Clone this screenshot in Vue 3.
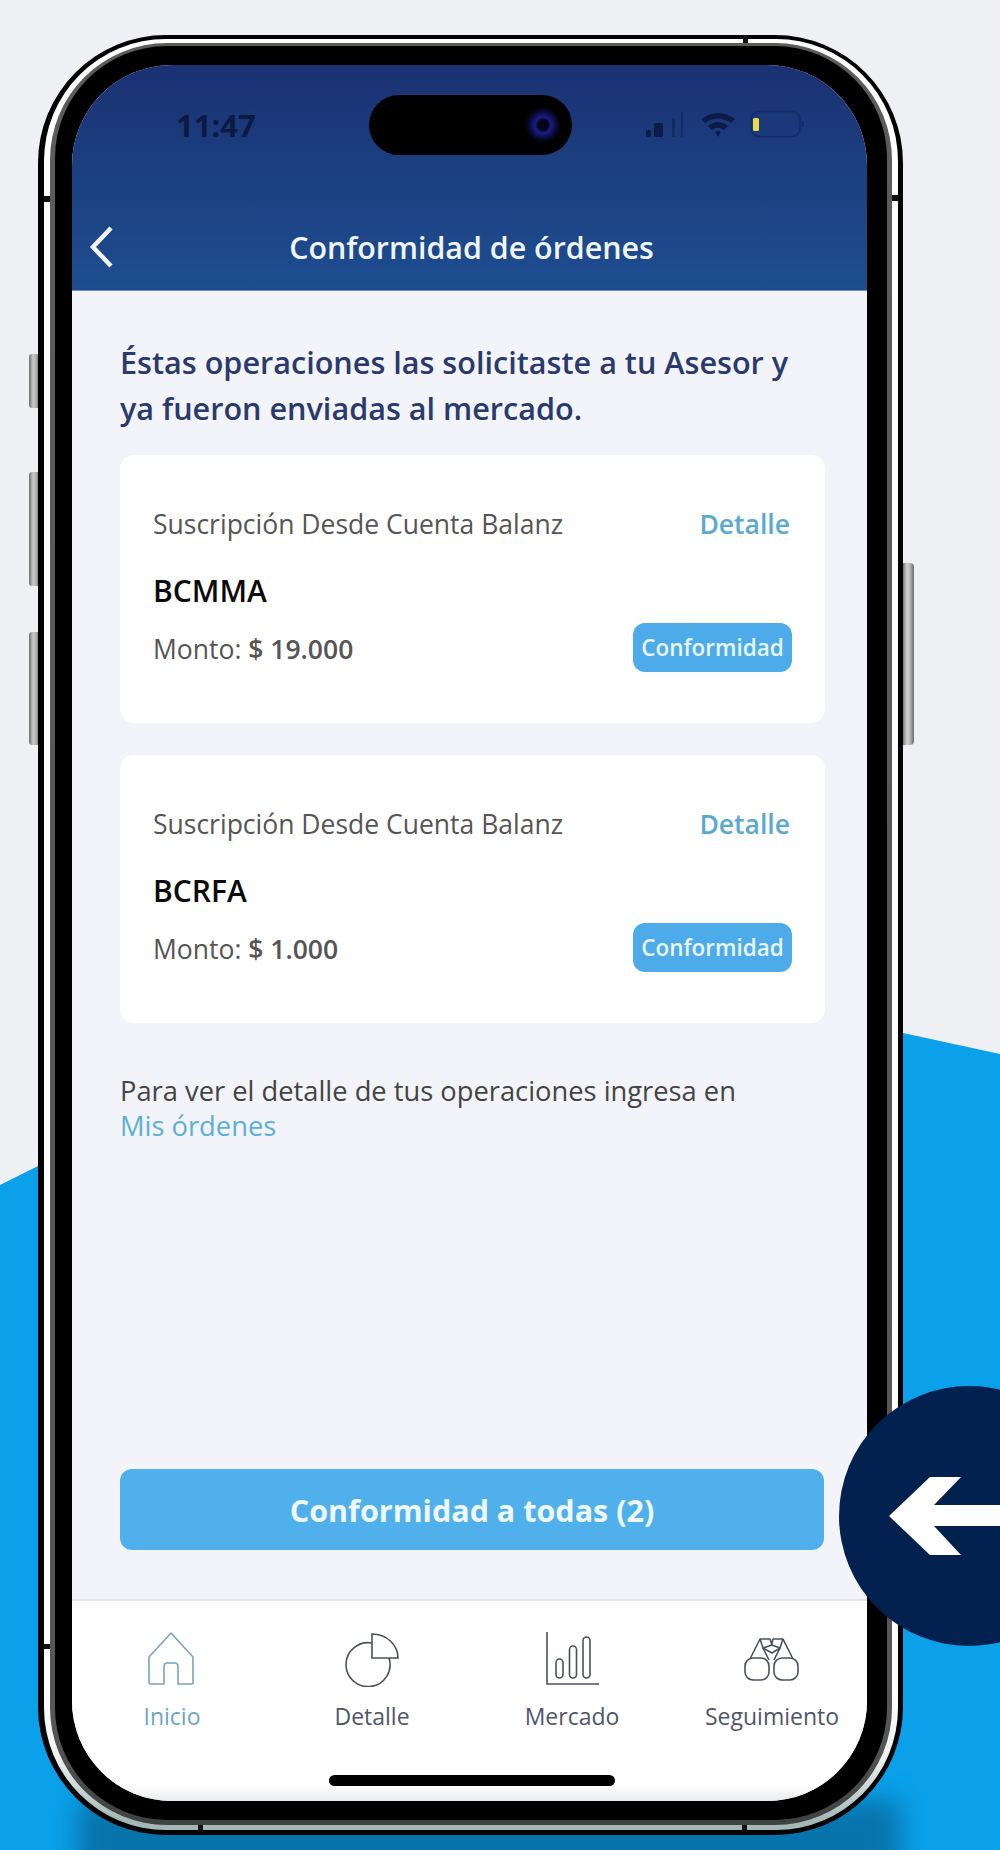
<script setup>
const orders = [
  { id: 1, kind: 'Suscripción Desde Cuenta Balanz', ticker: 'BCMMA', amount: '$ 19.000' },
  { id: 2, kind: 'Suscripción Desde Cuenta Balanz', ticker: 'BCRFA', amount: '$ 1.000' }
]

const tabs = [
  { key: 'home', label: 'Inicio', active: true },
  { key: 'pie', label: 'Detalle' },
  { key: 'bars', label: 'Mercado' },
  { key: 'watch', label: 'Seguimiento' }
]
</script>

<template>
  <div class="stage">
    <!-- fondo azul -->
    <svg class="blob" width="1000" height="1850" viewBox="0 0 1000 1850">
      <path d="M0 1185 L38 1166 C250 1060 700 990 903 1033 L1000 1054 V1850 H0 Z" fill="#0aa1ea" />
    </svg>
    <div class="floor-shadow"></div>

    <div class="phone">
      <span class="side side-l1"></span>
      <span class="side side-l2"></span>
      <span class="side side-l3"></span>
      <span class="side side-r"></span>

      <div class="band">
        <span class="tick tick-top"></span>
        <span class="tick tick-bl"></span>
        <span class="tick tick-br"></span>
        <span class="tick tick-lt"></span>
        <span class="tick tick-rt"></span>
        <span class="tick tick-lb"></span>
        <div class="rim">
          <div class="bezel">
            <div class="screen">
              <header class="top">
                <div class="status">
                  <span class="time">11:47</span>
                  <div class="island"><span class="camera"></span></div>
                  <svg class="status-icons" width="160" height="30" viewBox="0 0 160 30">
                    <rect x="0" y="20" width="5" height="7" rx="2" fill="#0d1c47" />
                    <rect x="8" y="13" width="9" height="14" rx="1.5" fill="#0d1c47" />
                    <rect x="26" y="8" width="3" height="19" rx="1.5" fill="#132a63" />
                    <rect x="35" y="2" width="2" height="25" rx="1" fill="#132a63" />
                    <path d="M55 9 Q72 -3 89 9 L85 13 Q72 4 59 13 Z" fill="#0d1c47" />
                    <path d="M62 16 Q72 8 82 16 L78 20 Q72 15 66 20 Z" fill="#0d1c47" />
                    <path d="M69 22 Q72 20 75 22 L72 27 Z" fill="#0d1c47" />
                    <rect x="105" y="1.5" width="49" height="25" rx="8" fill="none" stroke="#152c68" stroke-width="1.6" />
                    <rect x="107" y="8" width="6" height="13" rx="1.5" fill="#ecd94a" />
                    <rect x="155.500" y="11" width="2" height="6" rx="1" fill="#152c68" />
                  </svg>
                </div>
                <div class="nav">
                  <svg class="back" width="26" height="42" viewBox="0 0 26 42">
                    <path d="M23 2 L5 21 L23 40" fill="none" stroke="#f2f6fb" stroke-width="4.5" />
                  </svg>
                  <h1 class="title">Conformidad de órdenes</h1>
                  <span></span>
                </div>
              </header>

              <main class="body">
                <h2 class="lead">Éstas operaciones las solicitaste a tu Asesor y<br />ya fueron enviadas al mercado.</h2>

                <section v-for="order in orders" :key="order.id" class="card">
                  <div class="card-row">
                    <span class="kind">{{ order.kind }}</span>
                    <a class="detail">Detalle</a>
                  </div>
                  <div class="ticker">{{ order.ticker }}</div>
                  <div class="card-row">
                    <span class="amount">Monto: <b>{{ order.amount }}</b></span>
                    <button class="ok">Conformidad</button>
                  </div>
                </section>

                <p class="note">Para ver el detalle de tus operaciones ingresa en <a>Mis órdenes</a></p>

                <button class="ok-all">Conformidad a todas (2)</button>
              </main>

              <nav class="tabs">
                <div v-for="tab in tabs" :key="tab.key" class="tab" :class="{ active: tab.active }">
                  <svg width="60" height="56" viewBox="0 0 60 56" fill="none" stroke="currentColor" stroke-width="1.6">
                    <template v-if="tab.key === 'home'">
                      <path d="M7 52 V26 L29 2 L51 26 V52 Q51 53 50 53 H36 V36 Q36 32 33 32 H25 Q22 32 22 36 V53 H8 Q7 53 7 52 Z" stroke-linejoin="round" />
                    </template>
                    <template v-else-if="tab.key === 'pie'">
                      <path d="M30 12 A22 22 0 1 0 47 27" />
                      <path d="M30 3 V27 H56 A26 24 0 0 0 30 3 Z" />
                    </template>
                    <template v-else-if="tab.key === 'bars'">
                      <path d="M5 1 V53 H57" />
                      <rect x="14" y="28" width="7" height="19" rx="3.5" />
                      <rect x="27.500" y="15" width="7" height="32" rx="3.5" />
                      <rect x="41" y="6" width="7" height="41" rx="3.5" />
                    </template>
                    <template v-else>
                      <rect x="3" y="27" width="24" height="22" rx="8" />
                      <rect x="32" y="27" width="24" height="22" rx="8" />
                      <path d="M8 28 L18 8 H28 L30 14" stroke-linejoin="round" />
                      <path d="M51 28 L41 8 H31 L29.500 14" stroke-linejoin="round" />
                      <path d="M18 8 L21 17 L27 29" />
                      <path d="M41 8 L38 17 L32 29" />
                      <path d="M21 17 L30 14 L38 17 L30 22 Z" stroke-linejoin="round" />
                    </template>
                  </svg>
                  <span class="tab-label">{{ tab.label }}</span>
                </div>
                <span class="home-bar"></span>
              </nav>
            </div>
          </div>
        </div>
      </div>
    </div>

    <!-- flecha sobre el telefono -->
    <div class="callout">
      <svg width="161" height="260" viewBox="0 0 161 260">
        <path d="M50 130 L91 91 H122 L95 119 H161 V140 H95 L122 169 H91 Z" fill="#fff" />
      </svg>
    </div>
  </div>
</template>

<style scoped>
.stage {
  position: relative;
  width: 1000px;
  height: 1850px;
  padding: 35px 0 0 38px;
  box-sizing: border-box;
  overflow: hidden;
  background: #eff0f4;
  font-family: "Open Sans", "Noto Sans", sans-serif;
}

.blob {
  position: absolute;
  left: 0;
  top: 0;
}

.floor-shadow {
  position: absolute;
  left: 78px;
  right: 100px;
  top: 1800px;
  height: 100px;
  background: #0773ab;
  filter: blur(13px);
}

.phone {
  position: relative;
  width: 865px;
  height: 1800px;
  box-sizing: border-box;
  padding: 4px 5px 5px 6px;
  background: #000;
  border-radius: 128px;
}

.side {
  position: absolute;
  left: -9px;
  width: 9px;
  border-radius: 3px 0 0 3px;
  background: linear-gradient(90deg, #6d6d6d, #c9c9c9 45%, #b5b5b5 75%, #8a8a8a);
}

.side-l1 { top: 319px; height: 54px; }
.side-l2 { top: 437px; height: 114px; }
.side-l3 { top: 597px; height: 113px; }

.side-r {
  left: auto;
  right: -11px;
  top: 528px;
  width: 11px;
  height: 182px;
  border-radius: 0 4px 4px 0;
  background: linear-gradient(270deg, #6b6b6b, #bdbdbd 40%, #cfcfcf 65%, #777);
}

.band {
  position: relative;
  height: 100%;
  box-sizing: border-box;
  padding: 4px 6px 5px 6px;
  border-radius: 122px;
  background: linear-gradient(#fff 92%, #eef2f1 96%, #a3b7b5 99.5%);
}

.tick {
  position: absolute;
  background: #111;
}

.tick-top { left: 699px; top: -4px; width: 5px; height: 8px; }
.tick-bl { left: 154px; bottom: 0; width: 5px; height: 5px; }
.tick-br { left: 698px; bottom: 0; width: 5px; height: 5px; }
.tick-lt { left: 0; top: 157px; width: 6px; height: 6px; }
.tick-rt { right: 0; top: 156px; width: 6px; height: 6px; }
.tick-lb { left: 0; top: 1605px; width: 6px; height: 5px; }

.rim {
  height: 100%;
  box-sizing: border-box;
  padding: 3px 5px 5px 5px;
  border-radius: 117px;
  background: linear-gradient(#5c5c5c, #565656 95%, #3f4242);
}

.bezel {
  height: 100%;
  box-sizing: border-box;
  padding: 19px 20px 19px 17px;
  border-radius: 112px;
  background: #000;
}

.screen {
  display: flex;
  flex-direction: column;
  height: 100%;
  overflow: hidden;
  border-radius: 100px;
  background: #f3f4f9;
}

.top {
  display: flex;
  flex-direction: column;
  flex: none;
  height: 226px;
  box-sizing: border-box;
  padding-top: 30px;
  border-bottom: 1px solid #6f8db2;
  background: linear-gradient(#1a3172, #1e4e90);
}

.status {
  display: flex;
  align-items: center;
  height: 60px;
}

.time {
  width: 193px;
  padding-left: 104px;
  color: #0b1a42;
  font-size: 31px;
  font-weight: 700;
}

.island {
  display: flex;
  align-items: center;
  justify-content: flex-end;
  width: 203px;
  height: 60px;
  box-sizing: border-box;
  padding-right: 11px;
  border-radius: 30px;
  background: #000;
}

.camera {
  width: 36px;
  height: 36px;
  border-radius: 50%;
  background: radial-gradient(circle, #04041a 0 5px, #1c1c86 8px, #0b0b40 13px, #000 18px);
}

.status-icons {
  margin-left: 74px;
}

.nav {
  display: grid;
  grid-template-columns: 1fr auto 1fr;
  align-items: center;
  height: 86px;
  margin-top: auto;
}

.back {
  margin-left: 16px;
}

.title {
  margin: 0 0 0 4px;
  color: #f0f5fb;
  font-size: 30.400px;
  font-weight: 600;
  white-space: nowrap;
}

.body {
  display: flex;
  flex-direction: column;
  flex: 1;
  min-height: 0;
  box-sizing: border-box;
  padding: 48px 42px 49px 48px;
}

.lead {
  margin: 0 0 24px;
  color: #2b3a6d;
  font-size: 30.600px;
  font-weight: 600;
  line-height: 46px;
  white-space: nowrap;
}

.card {
  display: flex;
  flex-direction: column;
  flex: none;
  height: 268px;
  box-sizing: border-box;
  margin-bottom: 32px;
  padding: 51px 33px 0 33px;
  border-radius: 14px;
  background: #fff;
}

.card-row {
  display: flex;
  align-items: center;
  justify-content: space-between;
}

.kind,
.amount {
  color: #555;
  font-size: 26.500px;
}

.amount b {
  font-weight: 600;
}

.detail {
  margin-right: 2px;
  color: #59a9d0;
  font-size: 26.500px;
  font-weight: 600;
}

.ticker {
  margin: 28px 0 12px;
  color: #0b0b0b;
  font-size: 30px;
  font-weight: 600;
  line-height: 41px;
}

.ok {
  width: 159px;
  height: 49px;
  margin-bottom: 3px;
  padding: 0;
  border: 0;
  border-radius: 12px;
  background: #4cabe8;
  color: #e9f6fc;
  font-family: inherit;
  font-size: 22.500px;
  font-weight: 600;
}

.note {
  margin: 18px 0 0;
  color: #444;
  font-size: 27.300px;
  line-height: 35px;
  white-space: nowrap;
}

.note a {
  display: block;
  color: #5cb0d6;
}

.ok-all {
  flex: none;
  height: 81px;
  margin: auto 1px 0 0;
  padding: 0;
  border: 0;
  border-radius: 12px;
  background: #4fb0ec;
  color: #eef8fd;
  font-family: inherit;
  font-size: 30.500px;
  font-weight: 700;
}

.tabs {
  position: relative;
  display: grid;
  grid-template-columns: repeat(4, 200px);
  flex: none;
  height: 202px;
  box-sizing: border-box;
  padding: 30px 0 0 0;
  border-top: 2px solid #e4e5e8;
  background: linear-gradient(#fff 92%, #e9ebec);
}

.tab {
  display: flex;
  flex-direction: column;
  align-items: center;
  color: #4a4f63;
}

.tab.active {
  color: #7ba3bd;
}

.tab-label {
  margin-top: 13px;
  color: #50566a;
  font-size: 23px;
  white-space: nowrap;
}

.active .tab-label {
  color: #6ea5c4;
}

.home-bar {
  position: absolute;
  left: 257px;
  bottom: 15px;
  width: 286px;
  height: 11px;
  border-radius: 6px;
  background: #000;
}

.callout {
  position: absolute;
  left: 839px;
  top: 1386px;
  width: 260px;
  height: 260px;
  border-radius: 50%;
  background: #03214f;
}

.callout svg {
  display: block;
}
</style>

<style>
html,
body {
  background: #eff0f4;
}
</style>
